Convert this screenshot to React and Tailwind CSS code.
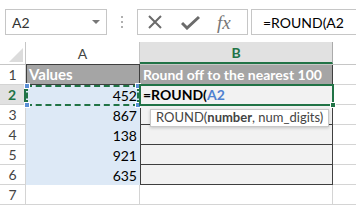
import React from 'react';

const rows = [
  { n: 1 },
  { n: 2, val: 452 },
  { n: 3, val: 867 },
  { n: 4, val: 138 },
  { n: 5, val: 921 },
  { n: 6, val: 635 },
  { n: 7 },
];

const Handle = ({ className }) => (
  <div className={`absolute w-[6px] h-[6px] bg-[#5b8fd6] border border-white ${className}`} />
);

export default function App() {
  return (
    <div className="w-[356px] h-[211px] bg-white overflow-hidden relative font-['Lato','Liberation_Sans',sans-serif] text-[#222]">
      {/* formula bar */}
      <div className="flex items-center h-[26px] mt-[9px]">
        <div className="ml-[5px] w-[102px] h-full border border-[#c6c6c6] flex items-center justify-between pl-[6px] pr-[6px]">
          <span className="text-[14px] text-[#333]">A2</span>
          <svg width="8" height="5" viewBox="0 0 8 5"><path d="M0 0h8L4 4z" fill="#777" /></svg>
        </div>
        <div className="w-[30px] flex flex-col items-center gap-[3px]">
          <span className="w-[2px] h-[2px] bg-[#b0b0b0]" />
          <span className="w-[2px] h-[2px] bg-[#b0b0b0]" />
          <span className="w-[2px] h-[2px] bg-[#b0b0b0]" />
        </div>
        <div className="w-[111px] h-full border border-[#c6c6c6] flex items-center">
          <svg className="ml-[9px]" width="16" height="16" viewBox="0 0 16 16">
            <path d="M2 2l12 12M14 2L2 14" stroke="#6b6b6b" strokeWidth="2" />
          </svg>
          <svg className="ml-[18px]" width="19" height="15" viewBox="0 0 19 15">
            <path d="M1 8l5 5L18 2" stroke="#6b6b6b" strokeWidth="3" fill="none" />
          </svg>
          <span className="ml-[17px] font-['Liberation_Serif',serif] italic text-[19px] text-[#777] leading-none">fx</span>
        </div>
        <div className="ml-[3px] flex-1 h-full border border-r-0 border-[#c6c6c6] flex items-center pl-[11px]">
          <span className="text-[14px] text-black">=ROUND(A2</span>
        </div>
      </div>

      {/* sheet */}
      <div className="mt-[7px] relative">
        {/* column headers */}
        <div className="flex h-[23px] border-b border-[#c6c6c6]">
          <div className="w-[26px] border-r border-[#c6c6c6] relative">
            <svg className="absolute right-[2px] bottom-[2px]" width="14" height="14" viewBox="0 0 14 14">
              <path d="M14 0v14H0z" fill="#dcdcdc" />
            </svg>
          </div>
          <div className="w-[114px] border-r border-[#c6c6c6] flex items-center justify-center text-[14px] text-[#444]">A</div>
          <div className="w-[193px] bg-[#e1e1e1] border-b-2 border-[#217346] border-r border-r-[#ababab] flex items-center justify-center text-[14px] font-bold text-[#217346]">B</div>
          <div className="flex-1" />
        </div>

        {rows.map((r) => (
          <div key={r.n} className="flex h-[20px]">
            <div className={`w-[26px] border-r border-b border-[#d4d4d4] flex items-center justify-center text-[14px] ${r.n === 2 ? 'bg-[#e1e1e1] text-[#217346] font-bold border-r-2 border-r-[#217346]' : 'text-[#444]'}`}>
              {r.n}
            </div>
            {r.n === 1 ? (
              <>
                <div className="w-[114px] -mt-px bg-[#a5a5a5] border border-[#3f3f3f] flex items-center pl-[2px] text-[15px] font-bold text-white">Values</div>
                <div className="w-[193px] bg-[#a5a5a5] border-b border-r border-[#3f3f3f] flex items-center pl-[3px] text-[14px] font-bold text-white whitespace-nowrap">Round off to the nearest 100</div>
              </>
            ) : r.val ? (
              <>
                <div className="w-[114px] bg-[#dde9f6] flex items-center justify-end pr-[3px] text-[14px] text-black">{r.val}</div>
                <div className={`w-[193px] bg-[#f2f2f2] border-l border-b border-r border-[#3f3f3f] flex items-center text-[14px] ${r.n === 2 ? 'font-bold' : ''}`}>
                  {r.n === 2 && (
                    <span className="pl-[2px] text-black whitespace-nowrap">=ROUND(<span className="text-[#4f81d0]">A2</span></span>
                  )}
                </div>
              </>
            ) : (
              <>
                <div className="w-[114px] border-r border-b border-[#d4d4d4]" />
                <div className="w-[193px] border-r border-b border-[#d4d4d4]" />
              </>
            )}
            <div className="flex-1 border-b border-[#d4d4d4]" />
          </div>
        ))}

        {/* reference marquee on A2 */}
        <div className="absolute left-[26px] top-[43px] w-[113px] h-[21px] border-2 border-dashed border-[#217346] pointer-events-none">
          <Handle className="-left-[4px] -top-[4px]" />
          <Handle className="-right-[4px] -top-[4px]" />
          <Handle className="-left-[4px] -bottom-[4px]" />
          <Handle className="-right-[4px] -bottom-[4px]" />
        </div>

        {/* active cell B2 */}
        <div className="absolute left-[139px] top-[42px] w-[195px] h-[22px] border-2 border-[#217346] pointer-events-none">
          <div className="absolute -right-[4px] -bottom-[4px] w-[6px] h-[6px] bg-[#217346] border border-white" />
        </div>

        {/* function tooltip */}
        <div className="absolute left-[150px] top-[67px] h-[18px] px-[5px] bg-white border border-[#c8c8c8] shadow-[0_1px_3px_rgba(0,0,0,0.2)] flex items-center text-[13px] text-[#444] whitespace-nowrap">
          ROUND(<span className="font-bold">number</span>, num_digits)
        </div>
      </div>
    </div>
  );
}
